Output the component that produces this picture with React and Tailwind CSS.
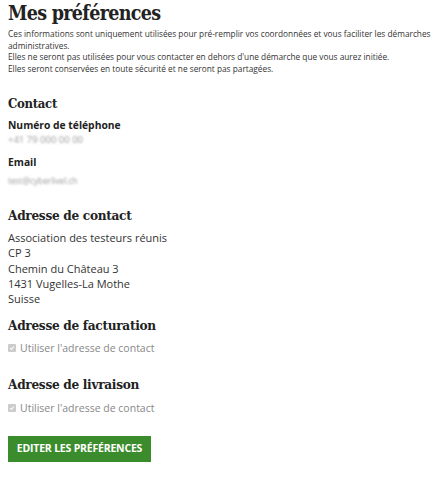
export default function App() {
  const slab = { fontFamily: '"DejaVu Serif Condensed", "Liberation Serif", serif', fontStretch: 'condensed' };
  const check = (
    <span className="w-[8px] h-[8px] rounded-[1px] bg-[#ccc] flex items-center justify-center">
      <svg width="6" height="6" viewBox="0 0 10 10"><path d="M2 5 L4 7.5 L8 2.5" stroke="#fff" strokeWidth="1.8" fill="none" /></svg>
    </span>
  );
  return (
    <div className="bg-white w-[439px] h-[480px] px-2 text-[#333]" style={{ fontFamily: '"Open Sans", "Liberation Sans", sans-serif' }}>
      <h1 className="text-[19.5px] leading-[26px] font-bold text-[#222] pt-[1px] tracking-[-0.7px]" style={slab}>Mes préférences</h1>
      <div className="text-[8.3px] leading-[11.7px] text-[#333] mt-[1px]">
        <p>Ces informations sont uniquement utilisées pour pré-remplir vos coordonnées et vous faciliter les démarches administratives.</p>
        <p>Elles ne seront pas utilisées pour vous contacter en dehors d'une démarche que vous aurez initiée.</p>
        <p>Elles seront conservées en toute sécurité et ne seront pas partagées.</p>
      </div>

      <h2 className="text-[13px] leading-[18px] font-bold text-[#222] mt-[20px] tracking-[-0.3px]" style={slab}>Contact</h2>
      <div className="mt-[5px] text-[10.3px] font-bold text-[#222] leading-[14px]">Numéro de téléphone</div>
      <div className="text-[9.5px] leading-[14px] text-[#999] blur-[1px] mt-[1px]">+41 79 000 00 00</div>
      <div className="mt-[8px] text-[10.3px] font-bold text-[#222] leading-[14px]">Email</div>
      <div className="text-[8.3px] leading-[14px] text-[#999] blur-[1px] mt-[5px]">test@cyberlivel.ch</div>

      <h2 className="text-[13.5px] leading-[18px] font-bold text-[#222] mt-[18px] tracking-[-0.3px]" style={slab}>Adresse de contact</h2>
      <div className="mt-[6px] text-[11px] leading-[15.4px] text-[#333]">
        <div>Association des testeurs réunis</div>
        <div>CP 3</div>
        <div>Chemin du Château 3</div>
        <div>1431 Vugelles-La Mothe</div>
        <div>Suisse</div>
      </div>

      <h2 className="text-[13.5px] leading-[18px] font-bold text-[#222] mt-[9px] tracking-[-0.3px]" style={slab}>Adresse de facturation</h2>
      <label className="mt-[7px] flex items-center gap-[4px] text-[10.5px] leading-[15px] text-[#888]">
        {check}
        Utiliser l'adresse de contact
      </label>

      <h2 className="text-[13.5px] leading-[18px] font-bold text-[#222] mt-[19px] tracking-[-0.3px]" style={slab}>Adresse de livraison</h2>
      <label className="mt-[8px] flex items-center gap-[4px] text-[10.5px] leading-[15px] text-[#888]">
        {check}
        Utiliser l'adresse de contact
      </label>

      <button className="mt-[20px] bg-[#3b8c2d] text-white font-bold text-[10.5px] h-[26px] w-[143px] tracking-[-0.2px]">EDITER LES PRÉFÉRENCES</button>
    </div>
  );
}
